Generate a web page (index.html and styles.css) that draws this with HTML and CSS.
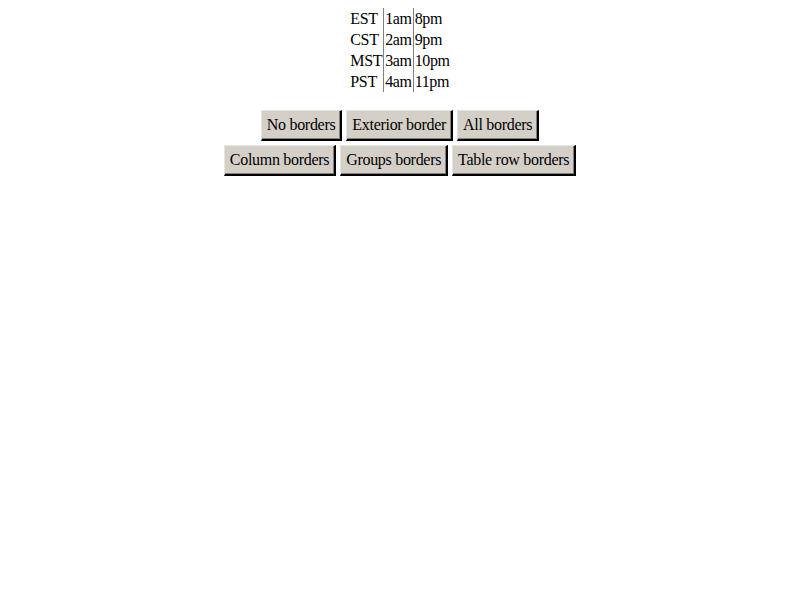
FILE: index.html
```html
<!DOCTYPE html>
<html>
<head>
<meta charset="utf-8">
<link rel="stylesheet" href="styles.css">
</head>
<body>
<table class="zones">
<tr><td>EST</td><td>1am</td><td>8pm</td></tr>
<tr><td>CST</td><td>2am</td><td>9pm</td></tr>
<tr><td>MST</td><td>3am</td><td>10pm</td></tr>
<tr><td>PST</td><td>4am</td><td>11pm</td></tr>
</table>
<div class="controls">
<div class="row">
<button class="btn">No borders</button>
<button class="btn">Exterior border</button>
<button class="btn">All borders</button>
</div>
<div class="row">
<button class="btn">Column borders</button>
<button class="btn">Groups borders</button>
<button class="btn">Table row borders</button>
</div>
</div>
</body>
</html>
```
FILE: styles.css
```css
html, body {
  background: #ffffff;
}
body {
  margin: 8px;
  font-family: "Liberation Serif", "Times New Roman", serif;
  font-size: 16px;
  color: #000;
}
.zones {
  margin: 0 auto;
  border-collapse: collapse;
  font-size: 16px;
  letter-spacing: -0.35px;
}
.zones td {
  padding: 1px;
  line-height: 19px;
  text-align: left;
}
.zones td + td {
  border-left: 1px solid #808080;
}
.controls {
  margin-top: 18px;
  display: flex;
  flex-direction: column;
  align-items: center;
  gap: 4px;
}
.row {
  display: flex;
  gap: 4px;
  justify-content: center;
}
.btn {
  font-family: "Liberation Serif", "Times New Roman", serif;
  font-size: 16px;
  line-height: 20px;
  letter-spacing: -0.3px;
  color: #000;
  background: #d4d0c8;
  padding: 4px 5px 4px 5px;
  border-style: solid;
  border-width: 1px 2px 2px 1px;
  border-color: #e6e4df #000 #000 #e6e4df;
  box-shadow: inset -1px -1px 0 #808080;
  margin: 0;
  border-radius: 0;
}
```
